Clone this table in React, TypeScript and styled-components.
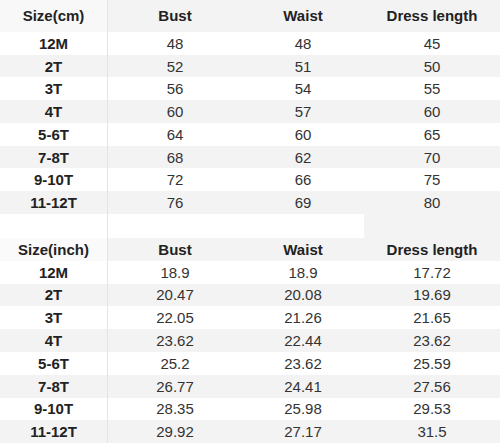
import React from 'react';
import styled, { createGlobalStyle } from 'styled-components';

const GlobalStyle = createGlobalStyle`
  html, body {
    margin: 0;
    padding: 0;
    background: #fff;
  }
  body {
    font-family: "Liberation Sans", Arial, sans-serif;
  }
`;

const Sheet = styled.div`
  width: 500px;
  height: 443px;
  overflow: hidden;
  display: flex;
  flex-direction: column;
  background: #fff;
`;

const Row = styled.div<{ $h: number; $shade?: boolean }>`
  display: grid;
  grid-template-columns: 108px 134px 122px 136px;
  height: ${(p) => p.$h}px;
  background: ${(p) => (p.$shade ? '#f3f3f3' : '#fff')};
`;

const Cell = styled.div<{ $bold?: boolean; $first?: boolean; $bg?: string }>`
  display: flex;
  align-items: center;
  justify-content: center;
  font-size: 15px;
  font-weight: ${(p) => (p.$bold ? 700 : 400)};
  color: ${(p) => (p.$bold ? '#222' : '#333')};
  background: ${(p) => p.$bg || 'transparent'};
  border-right: ${(p) => (p.$first ? '1px solid #e4e4e4' : 'none')};
  white-space: nowrap;
`;

const GapFill = styled.div`
  grid-column: 2 / span 2;
  background: #fff;
`;

const GapGray = styled.div`
  background: #f3f3f3;
`;

type Table = {
  unit: string;
  headH: number;
  rowH: number;
  headBg: string;
  rows: [string, string, string, string][];
};

const cm: Table = {
  unit: 'Size(cm)',
  headH: 32,
  rowH: 22.75,
  headBg: '#f8f8f8',
  rows: [
    ['12M', '48', '48', '45'],
    ['2T', '52', '51', '50'],
    ['3T', '56', '54', '55'],
    ['4T', '60', '57', '60'],
    ['5-6T', '64', '60', '65'],
    ['7-8T', '68', '62', '70'],
    ['9-10T', '72', '66', '75'],
    ['11-12T', '76', '69', '80'],
  ],
};

const inch: Table = {
  unit: 'Size(inch)',
  headH: 22.75,
  rowH: 22.8,
  headBg: '#fafafa',
  rows: [
    ['12M', '18.9', '18.9', '17.72'],
    ['2T', '20.47', '20.08', '19.69'],
    ['3T', '22.05', '21.26', '21.65'],
    ['4T', '23.62', '22.44', '23.62'],
    ['5-6T', '25.2', '23.62', '25.59'],
    ['7-8T', '26.77', '24.41', '27.56'],
    ['9-10T', '28.35', '25.98', '29.53'],
    ['11-12T', '29.92', '27.17', '31.5'],
  ],
};

const SizeTable: React.FC<{ t: Table }> = ({ t }) => (
  <>
    <Row $h={t.headH} $shade>
      <Cell $bold $first $bg={t.headBg}>{t.unit}</Cell>
      <Cell $bold>Bust</Cell>
      <Cell $bold>Waist</Cell>
      <Cell $bold>Dress length</Cell>
    </Row>
    {t.rows.map((r, i) => (
      <Row key={r[0]} $h={t.rowH} $shade={i % 2 === 1}>
        <Cell $bold $first>{r[0]}</Cell>
        <Cell>{r[1]}</Cell>
        <Cell>{r[2]}</Cell>
        <Cell>{r[3]}</Cell>
      </Row>
    ))}
  </>
);

const App: React.FC = () => (
  <>
    <GlobalStyle />
    <Sheet>
      <SizeTable t={cm} />
      <Row $h={24}>
        <Cell $first />
        <GapFill />
        <GapGray />
      </Row>
      <SizeTable t={inch} />
    </Sheet>
  </>
);

export default App;
